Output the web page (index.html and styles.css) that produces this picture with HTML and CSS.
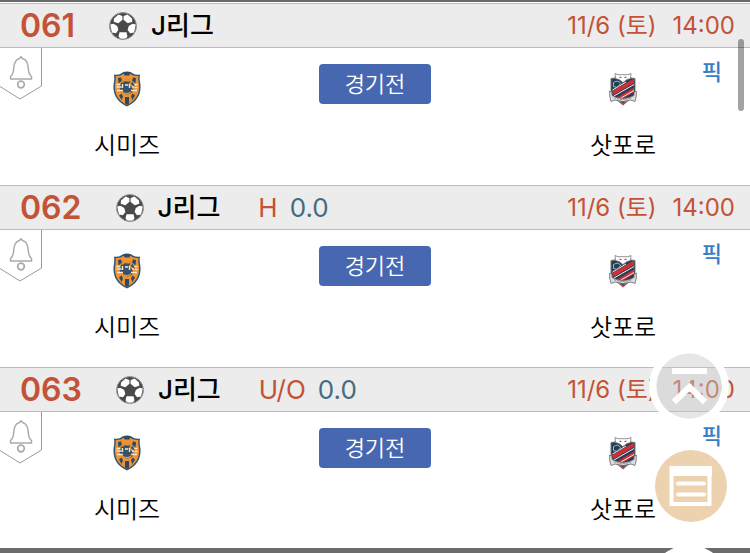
FILE: index.html
```html
<!DOCTYPE html>
<html lang="ko">
<head>
<meta charset="utf-8">
<meta name="viewport" content="width=device-width, initial-scale=1">
<title>J리그</title>
<link rel="stylesheet" href="styles.css">
</head>
<body>
<svg class="defs" aria-hidden="true">
  <symbol id="ball" viewBox="0 0 28 28">
    <circle cx="14" cy="14" r="13.5" fill="#4a4a4a"/>
    <g fill="#fff">
      <path d="M5 6.500 9.500 2.500l3.800 1.600.2 3.600-4.200 3.500-4.600-1.500z"/>
      <path d="M23 6.500 18.500 2.500l-3.800 1.600-.2 3.600 4.200 3.500 4.600-1.500z"/>
      <path d="M1.200 12.500l3.300-.8 3.700 2.400 1.200 4-2.500 3.200-4 -.8z"/>
      <path d="M26.800 12.500l-3.300-.8-3.700 2.400-1.200 4 2.500 3.200 4-.8z"/>
      <path d="M10.500 20.300h7l1 4.200-2 2.200h-5l-2-2.200z"/>
    </g>
    <circle cx="14" cy="14" r="13.500" fill="none" stroke="#999" stroke-width="1"/>
  </symbol>
  <symbol id="bell" viewBox="0 0 42 52">
    <path d="M41.500 0v38L20 51 0 38.500" fill="none" stroke="#999"/>
    <path d="M10.500 31v-2.500c2.500-2 3-4 3.200-8 .2-6 2.300-9 5.800-10l1.500-1.800 1.500 1.800c3.500 1 5.600 4 5.800 10 .2 4 .7 6 3.200 8V31z" fill="none" stroke="#aaa" stroke-width="1.500" stroke-linejoin="round"/>
    <circle cx="21" cy="36.500" r="3.300" fill="none" stroke="#aaa" stroke-width="1.700"/>
  </symbol>
  <symbol id="shimizu" viewBox="0 0 28 36">
    <path d="M1 3.500q5 1 8.500-2Q14-.5 18.500 1.500q3.500 3 8.500 2-.8 4 .4 9.500c1 10-3 17.500-13.400 22.500C3.600 30.500-.4 23 .6 13 1.800 7.500 1 3.500 1 3.500z" fill="#34536c"/>
    <path d="M2.700 5q5 .3 8-2.300 3.300-1.200 6.600 0 3 2.600 8 2.300-.3 4 .7 9c.6 9-3 15.500-12 20C5 29.500 1.400 23 2 14c1-5 .7-9 .7-9z" fill="#ed9335"/>
    <path d="M10.500 1h7l-1 3.500h-5zM5 7l3-.5 1 3-3.500 3zM23 7l-3-.5-1 3 3.500 3zM12 26h4v6.500L14 34l-2-1.500zM6 24.500l2.500-2 1.500 3-1.500 3.500zM22 24.500l-2.500-2-1.500 3 1.500 3.500z" fill="#294b65"/>
    <circle cx="14" cy="16" r="7.500" fill="#34536c"/>
    <path d="M8.500 11.500q5-5 10-1l-2 3q5 2 4 7M8 20q5 5 10 1M11 9l5 1" fill="none" stroke="#ed9335" stroke-width="1.600"/>
    <path d="M3.500 13.500h4M3.500 16h5M9.500 13v4M12 14h3M16.500 13v4M19 16h2M21.500 13.500h3M21.500 16.500h3M4 19.500h6M18 19.500h6" fill="none" stroke="#fbe5c4" stroke-width="1.400"/>
  </symbol>
  <symbol id="sapporo" viewBox="0 0 28 33">
    <path d="M10 29.500h8L14 33z" fill="#c4343b"/>
    <path d="M2 6q12-3 24 0v12q0 8-12 13Q2 26 2 18z" fill="#233f55" stroke="#777" stroke-width="1"/>
    <path d="M3 18.500 25 6v4.500L4.500 22.500zM7 25.500 25 15v4.500L11 28z" fill="#d12d34"/>
    <path d="M3.500 17.500 17 9.500M5 23.500 25 12M12 25.500l13-7.500" stroke="#edf0f2" stroke-width="1"/>
    <path d="M4.500 10q5-3 7 1l-3 4-4-1z" fill="none" stroke="#a8b5c0" stroke-width="1"/>
    <path d="M6 1l3 1.200h10L22 1l-.5 5-3.500 1-4 3-4-3-3.500-1z" fill="#fff" stroke="#777" stroke-width=".8"/>
    <path d="M10.500 4.500l2 .8M17.500 4.500l-2 .8" stroke="#c4343b" stroke-width="1.200"/>
    <path d="M.7 18.500 3 20v3q11 6 22 0v-3l2.300-1.500v5L26 29l-4-1.500q-8 3-16 0L2 29 .7 23.500z" fill="#ddd" stroke="#666" stroke-width=".8"/>
    <path d="M5 25q9 4 18 0" fill="none" stroke="#888" stroke-width="1" stroke-dasharray="2 1"/>
  </symbol>
</svg>

<main class="list">
  <section class="match">
    <header class="head">
      <span class="num">061</span>
      <svg class="ball" aria-hidden="true"><use href="#ball"/></svg>
      <h2 class="league">J리그</h2>
      <time class="when"><span>11/6 (토)</span><span>14:00</span></time>
    </header>
    <div class="body">
      <button class="alarm" aria-label="알림"><svg><use href="#bell"/></svg></button>
      <div class="team"><svg class="crest"><use href="#shimizu"/></svg><span>시미즈</span></div>
      <button class="state">경기전</button>
      <div class="team"><svg class="crest small"><use href="#sapporo"/></svg><span>삿포로</span></div>
      <a class="pick" href="#">픽</a>
    </div>
  </section>
  <section class="match">
    <header class="head">
      <span class="num">062</span>
      <svg class="ball" aria-hidden="true"><use href="#ball"/></svg>
      <h2 class="league">J리그</h2>
      <span class="odds"><span class="kind">H</span><span>0.0</span></span>
      <time class="when"><span>11/6 (토)</span><span>14:00</span></time>
    </header>
    <div class="body">
      <button class="alarm" aria-label="알림"><svg><use href="#bell"/></svg></button>
      <div class="team"><svg class="crest"><use href="#shimizu"/></svg><span>시미즈</span></div>
      <button class="state">경기전</button>
      <div class="team"><svg class="crest small"><use href="#sapporo"/></svg><span>삿포로</span></div>
      <a class="pick" href="#">픽</a>
    </div>
  </section>
  <section class="match">
    <header class="head">
      <span class="num">063</span>
      <svg class="ball" aria-hidden="true"><use href="#ball"/></svg>
      <h2 class="league">J리그</h2>
      <span class="odds"><span class="kind">U/O</span><span>0.0</span></span>
      <time class="when"><span>11/6 (토)</span><span>14:00</span></time>
    </header>
    <div class="body">
      <button class="alarm" aria-label="알림"><svg><use href="#bell"/></svg></button>
      <div class="team"><svg class="crest"><use href="#shimizu"/></svg><span>시미즈</span></div>
      <button class="state">경기전</button>
      <div class="team"><svg class="crest small"><use href="#sapporo"/></svg><span>삿포로</span></div>
      <a class="pick" href="#">픽</a>
    </div>
  </section>
</main>

<div class="thumb"></div>
<button class="fab top" aria-label="맨 위로">
  <svg viewBox="0 0 80 80"><path d="M23 25h35" fill="none" stroke="#fff" stroke-width="6"/><path d="M25 56l15.500-15L56 56" fill="none" stroke="#fff" stroke-width="6"/></svg>
</button>
<button class="fab menu" aria-label="목록">
  <svg viewBox="0 0 72 72"><path d="M16.500 18h38v36h-38z" fill="none" stroke="#fff" stroke-width="4"/><path d="M15 16h42v10H15z" fill="#fff"/><path d="M23 33.500h26M23 44.500h26" stroke="#fff" stroke-width="4" stroke-linecap="round"/></svg>
</button>
<button class="fab next" aria-label="더보기"></button>
</body>
</html>
```
FILE: styles.css
```css
* { box-sizing: border-box; }

body {
  margin: 0;
  background: #fff;
  color: #000;
  font-family: Inter, "Noto Sans CJK KR", sans-serif;
  overflow: hidden;
}

button {
  margin: 0;
  padding: 0;
  border: 0;
  font: inherit;
  cursor: pointer;
}

.defs {
  position: absolute;
  width: 0;
  height: 0;
}

.list {
  padding-top: 1px;
  border-top: 2px solid #6b6b6b;
  border-bottom: 8px solid #6b6b6b;
}

.head {
  display: flex;
  align-items: center;
  height: 45px;
  padding: 0 15px 0 20px;
  background: #ececec;
  border-top: 1px solid #bbb;
  border-bottom: 1px solid #bbb;
  line-height: 40px;
  white-space: nowrap;
}

.num {
  color: #c35236;
  font-size: 32px;
  font-weight: 600;
}

.ball {
  width: 28px;
  height: 28px;
  margin-left: 34px;
}

.league {
  margin: 0 0 0 14px;
  color: #000;
  font-size: 26px;
  font-weight: 500;
}

.odds {
  display: flex;
  gap: 12px;
  margin-left: 38px;
  color: #456b80;
  font-size: 26px;
  font-weight: 400;
}

.kind { color: #c35236; }

.when {
  display: flex;
  gap: 16px;
  margin-left: auto;
  color: #c35236;
  font-size: 24px;
}

.body {
  position: relative;
  display: grid;
  grid-template-columns: 1fr 112px 1fr;
  column-gap: 65px;
  align-items: start;
  height: 137px;
  padding-top: 16px;
}

.match:last-child .body { height: 136px; }

.alarm {
  position: absolute;
  top: 0;
  left: 0;
  background: none;
}

.alarm svg {
  display: block;
  width: 42px;
  height: 52px;
}

.team {
  display: flex;
  flex-direction: column;
  align-items: center;
  gap: 21px;
  padding-top: 7px;
  font-size: 24px;
  font-weight: 350;
  line-height: 36px;
}

.crest {
  width: 28px;
  height: 36px;
}

.small { padding: 1px 0; }

.state {
  height: 40px;
  border-radius: 4px;
  background: #4768b0;
  color: #fff;
  font-size: 22px;
  font-weight: 350;
  line-height: 40px;
}

.pick {
  position: absolute;
  top: 8px;
  right: 28px;
  color: #397dc7;
  font-size: 22px;
  font-weight: 500;
  line-height: 32px;
  text-decoration: none;
}

.thumb {
  position: fixed;
  top: 39px;
  right: 6px;
  width: 6px;
  height: 72px;
  border-radius: 3px;
  background: rgba(0, 0, 0, 0.36);
}

.fab {
  position: fixed;
  border-radius: 50%;
}

.fab svg {
  display: block;
  width: 100%;
  height: 100%;
}

.top {
  right: 21px;
  bottom: 127px;
  width: 80px;
  height: 80px;
  background: radial-gradient(circle, rgba(200, 200, 200, 0.45) 32px, #fff 33px);
}

.menu {
  right: 23px;
  bottom: 31px;
  width: 72px;
  height: 72px;
  background: #edd2b0;
}

.next {
  right: 21px;
  bottom: -72px;
  width: 80px;
  height: 80px;
  background: #fff;
}
```
